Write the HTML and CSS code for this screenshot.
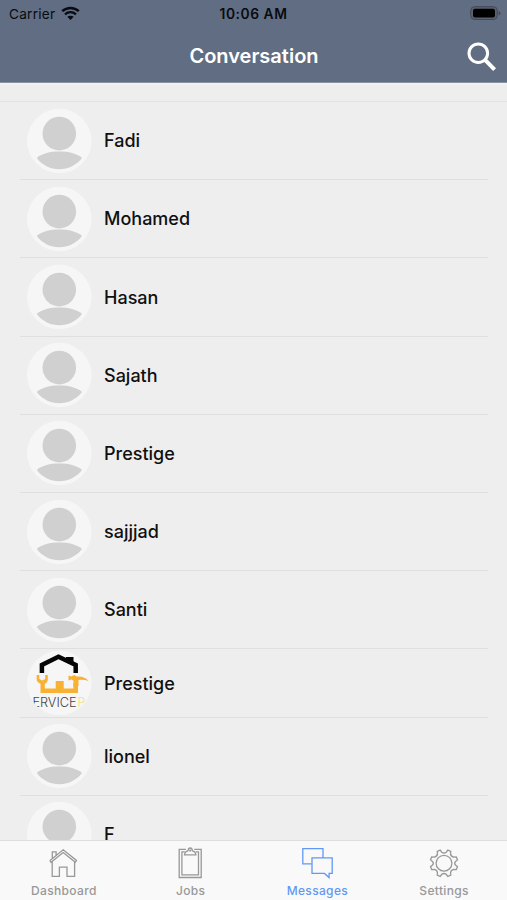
FILE: index.html
```html
<!DOCTYPE html>
<html lang="en">
<head>
<meta charset="utf-8">
<title>Conversation</title>
<link rel="stylesheet" href="styles.css">
</head>
<body>
<svg class="defs" aria-hidden="true">
  <symbol id="person" viewBox="0 0 66 66">
    <circle cx="33.300" cy="33" r="32.300" fill="#f6f6f6"/>
    <circle cx="33.3" cy="25.600" r="16.800" fill="#d0d0d0"/>
    <path d="M10.800 50C16 45.500 24 43.600 33.300 43.600S50.600 45.500 56 50C50 57.500 42 61.300 33.300 61.300S16.500 57.500 10.800 50Z" fill="#d0d0d0"/>
  </symbol>
</svg>
<div class="app">
  <header class="header">
    <div class="status">
      <div class="carrier"><span>Carrier</span>
        <svg width="19" height="15" viewBox="0 0 19 15" fill="none" stroke="#080b10"><path d="M1.200 5.200C6 .8 13 .8 17.800 5.200" stroke-width="2.500"/><path d="M4 8.300C7.200 5.500 11.800 5.500 15 8.300" stroke-width="2.300"/><path d="M9.500 14 6.300 10.800C8 9.300 11 9.300 12.700 10.800Z" fill="#080b10" stroke="none"/></svg>
      </div>
      <div class="time">10:06 AM</div>
      <svg class="battery" width="31" height="15" viewBox="0 0 31 15"><rect x=".7" y=".7" width="26.600" height="12.800" rx="4" fill="#59606f" stroke="#434957"/><rect x="3" y="2.800" width="22" height="8.600" rx="2" fill="#000"/><path d="M28.700 5v4.500q1.700-.8 1.700-2.250T28.700 5Z" fill="#434957"/></svg>
    </div>
    <div class="nav">
      <h1>Conversation</h1>
      <svg class="search" width="32" height="32" viewBox="0 0 32 32" fill="none" stroke="#fff"><circle cx="12.300" cy="12.200" r="9.300" stroke-width="3"/><path d="m19.300 19.200 9.300 9.400" stroke-width="4"/></svg>
    </div>
  </header>
  <main class="content">
    <div class="spacer"></div>
    <ul class="list">
      <li><svg class="avatar"><use href="#person"/></svg><span>Fadi</span></li>
      <li><svg class="avatar"><use href="#person"/></svg><span>Mohamed</span></li>
      <li><svg class="avatar"><use href="#person"/></svg><span>Hasan</span></li>
      <li><svg class="avatar"><use href="#person"/></svg><span>Sajath</span></li>
      <li><svg class="avatar"><use href="#person"/></svg><span>Prestige</span></li>
      <li><svg class="avatar"><use href="#person"/></svg><span>sajjjad</span></li>
      <li><svg class="avatar"><use href="#person"/></svg><span>Santi</span></li>
      <li class="short">
        <svg class="avatar" viewBox="0 0 66 66">
          <clipPath id="round"><circle cx="33.300" cy="33" r="32.300"/></clipPath>
          <g clip-path="url(#round)">
            <rect width="66" height="66" fill="#f6f6f6"/>
            <path d="M15.900 23V15L32.500 6.800 49.700 15v8" fill="none" stroke="#050505" stroke-width="4.500"/>
            <path d="M40 7h7.500v7l-7.500-3.500Z" fill="#050505"/>
            <path d="M10.700 25v4.600q.4 3 3.800 4.100v9.300h37.500V33h-4.700v5.500h-9.600V31h-8v7.500H18.800v-4.800q3-1.200 3-4.100V25h-2.600v3.900l-3 1.600-2.900-1.600V25Z" fill="#f8b133"/>
            <path d="M42.500 25.500l2.800 1 3-1.400 2.500 1.400q8-.6 11.700 4.600-4.500-1.800-10-1.100v6h-5v-5.300l-2-1.200-3 1Z" fill="#f8b133"/>
            <text class="brand" x="6.500" y="56.500" textLength="44" lengthAdjust="spacingAndGlyphs">ERVICE</text>
            <text class="brand accent" x="51.500" y="56.500">P</text>
          </g>
        </svg><span>Prestige</span></li>
      <li><svg class="avatar"><use href="#person"/></svg><span>lionel</span></li>
      <li><svg class="avatar"><use href="#person"/></svg><span>F</span></li>
    </ul>
  </main>
  <nav class="tabs">
    <a class="tab"><svg viewBox="0 0 32 32"><path d="M5.200 14.500v14.800h7.200v-9.200h7.600v9.200h7.600V14.500M3 13.500 16.200 2.800 29.500 13.500l-1.200 1.800L16.200 5.500 4 15.300 2.800 13.500M5.300 11.500V4.800h3.800v3.500"/></svg><span>Dashboard</span></a>
    <a class="tab"><svg viewBox="0 0 32 32"><path d="M12 2.300H5.200v28.200h22V2.300h-6.900M10.800 4.900H7.900v22.900h16.600V4.900h-2.800"/><path d="M10.500 7.800q.2-3.300 3.500-4Q14.300 1 16.200 1t2.200 2.800q3.300.7 3.500 4Z"/><circle cx="16.200" cy="3.600" r=".5"/></svg><span>Jobs</span></a>
    <a class="tab active"><svg viewBox="0 0 32 32"><path d="M10.200 16.900H1.800V1.600H22v9M11 10.900h20.200v15.500h-3.100v4.200l-4.600-4.200H11Z"/></svg><span>Messages</span></a>
    <a class="tab"><svg viewBox="0 0 32 32"><circle cx="16" cy="16.200" r="7.900"/><path d="M13.700 5.200Q16 6.800 18.300 5.200L19.800 3.100l3 1.200-.3 2.700q.6 2.800 3.500 3.200l2.300-.3 1.200 3-2 1.500q-1.600 1.900 0 3.700l2 1.600-1.200 2.900-2.600-.3q-2.800.5-3.200 3.300l.3 2.600-3 1.200-1.600-2.100q-2.200-1.600-4.400 0L12.200 29.400l-3-1.200.3-2.600q-.4-2.800-3.200-3.300l-2.600.3-1.200-2.900 2-1.600q1.600-1.800 0-3.700l-2-1.500 1.200-3 2.300.3q2.900-.4 3.500-3.200l-.3-2.700 3-1.200Z"/></svg><span>Settings</span></a>
  </nav>
</div>
</body>
</html>
```

FILE: styles.css
```css
* { box-sizing: border-box; }
body { margin: 0; font-family: Inter, "Liberation Sans", sans-serif; background: #eee; }
.defs { display: none; }
.app { width: 507px; height: 900px; display: flex; flex-direction: column; overflow: hidden; background: #eee; }
.header { flex: none; height: 83px; background: #616d82; border-bottom: 1px solid #8992a1; }
.status { height: 28px; display: grid; grid-template-columns: 1fr auto 1fr; align-items: center; padding: 0 6px 0 9px; color: #080b10; }
.carrier { display: flex; align-items: center; gap: 6px; font-size: 13.6px; letter-spacing: .25px; }
.carrier svg { margin-top: -2px; }
.time { font-size: 13.8px; font-weight: 600; letter-spacing: .55px; margin-right: 3px; }
.battery { justify-self: end; margin-top: -1px; }
.nav { height: 54px; display: grid; grid-template-columns: 1fr auto 1fr; align-items: center; padding-right: 9px; padding-left: 10px; color: #fff; }
h1 { grid-column: 2; margin: 2px 0 0; font-size: 20px; line-height: 28px; font-weight: 600; }
.search { justify-self: end; margin-top: 3px; }
.content { flex: 1; min-height: 0; overflow: hidden; }
.spacer { height: 19px; border-top: 2px solid #f2f2f1; border-bottom: 1px solid #e3e3e3; }
.list { list-style: none; margin: 0; padding: 0 19px 0 20px; }
.list li { height: 78.200px; display: flex; align-items: center; gap: 12px; padding-left: 6px; border-bottom: 1px solid #dfdfdf; font-size: 18px; font-weight: 500; color: #101010; }
.list li.short { height: 68.400px; }
.list span { padding-top: 1.400px; line-height: 22px; }
.avatar { flex: none; width: 66px; height: 66px; }
.brand { font: 300 12.400px Inter, sans-serif; fill: #444; }
.brand.accent { fill: #f5df80; }
.tabs { flex: none; height: 60px; display: grid; grid-template-columns: repeat(4, 1fr); background: #f9f9f9; border-top: 1px solid #dedede; }
.tab { display: flex; flex-direction: column; align-items: center; color: #989898; font-size: 12px; font-weight: 500; line-height: 16px; letter-spacing: .35px; padding-top: 6px; }
.tab svg { width: 32px; height: 32px; fill: none; stroke: currentColor; stroke-width: 1.300; }
.tab span { margin-top: 4px; padding-left: 1px; }
.tab.active { color: #6198f5; }
```
